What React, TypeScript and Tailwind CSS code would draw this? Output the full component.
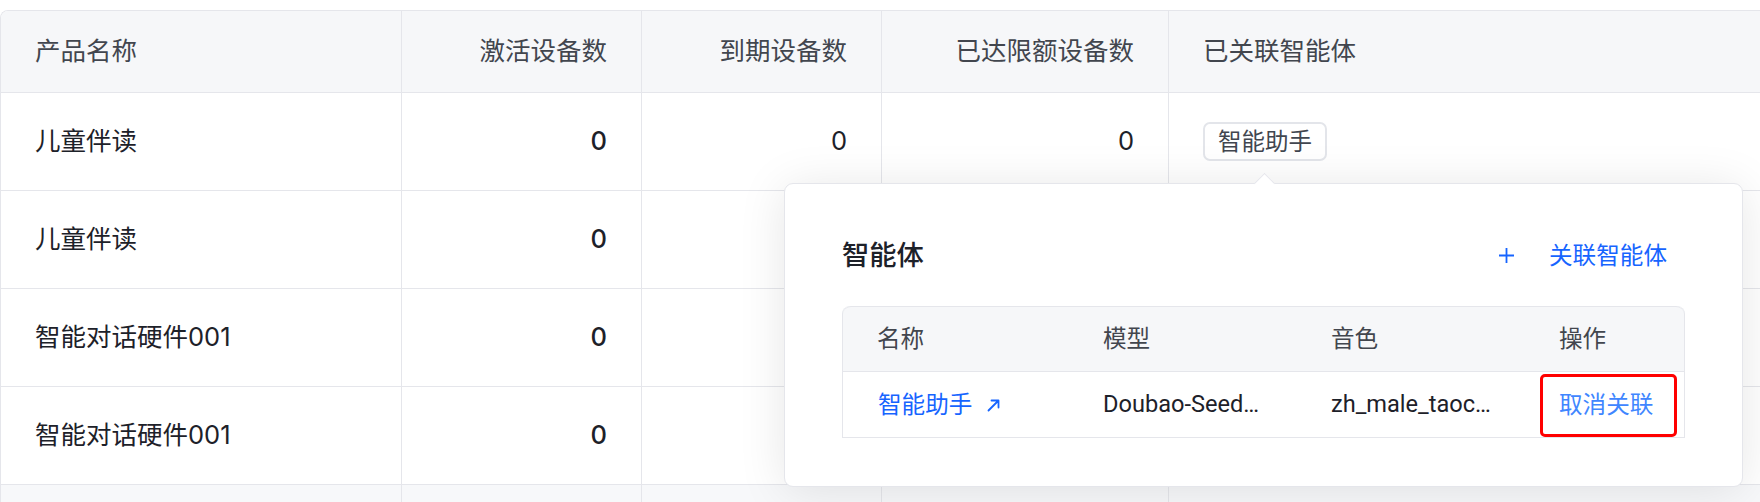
import React from "react";

const BORDER = "border-[#e5e6eb]";

type Row = { name: string; active: string; expired?: string; limited?: string; agent?: string };

const rows: Row[] = [
  { name: "儿童伴读", active: "0", expired: "0", limited: "0", agent: "智能助手" },
  { name: "儿童伴读", active: "0" },
  { name: "智能对话硬件001", active: "0" },
  { name: "智能对话硬件001", active: "0" },
];

function PlusIcon() {
  return (
    <svg width="17" height="17" viewBox="0 0 17 17" fill="none" stroke="#1664ff" strokeWidth="1.8">
      <path d="M8.5 1v15M1 8.5h15" />
    </svg>
  );
}

function ArrowIcon() {
  return (
    <svg width="13" height="13" viewBox="0 0 13 13" fill="none" stroke="#1664ff" strokeWidth="1.8" strokeLinecap="round" strokeLinejoin="round">
      <path d="M1.5 11.5 11.5 1.5M4.5 1.5h7v7" />
    </svg>
  );
}

export default function App() {
  const cell = `border-r border-b ${BORDER} flex items-center px-[34px]`;
  return (
    <div className="relative w-[1760px] h-[502px] overflow-hidden bg-white pt-[10px] font-['Inter','Noto_Sans_CJK_SC',sans-serif]">
      {/* main table */}
      <div className={`w-[1800px] border-l border-t ${BORDER} rounded-tl-[8px] overflow-hidden`}>
        <div className="grid grid-cols-[401px_240px_240px_287px_1fr] h-[82px] bg-[#f6f7f9] text-[25.5px] text-[#42464e]">
          <div className={cell}>产品名称</div>
          <div className={`${cell} justify-end`}>激活设备数</div>
          <div className={`${cell} justify-end`}>到期设备数</div>
          <div className={`${cell} justify-end`}>已达限额设备数</div>
          <div className={cell}>已关联智能体</div>
        </div>
        {rows.map((r, i) => (
          <div key={i} className="grid grid-cols-[401px_240px_240px_287px_1fr] h-[98px] bg-white text-[25.5px] text-[#1d2129]">
            <div className={cell}>{r.name}</div>
            <div className={`${cell} justify-end font-medium`}>{r.active}</div>
            <div className={`${cell} justify-end`}>{r.expired}</div>
            <div className={`${cell} justify-end`}>{r.limited}</div>
            <div className={cell}>
              {r.agent && (
                <span className="h-[39px] px-[13px] flex items-center rounded-[7px] border-2 border-[#e3e5ea] text-[23.5px] text-[#41464f]">
                  {r.agent}
                </span>
              )}
            </div>
          </div>
        ))}
        <div className="grid grid-cols-[401px_240px_240px_287px_1fr] h-[98px] bg-[#f7f8fa]">
          <div className={cell}></div>
          <div className={cell}></div>
          <div className={cell}></div>
          <div className={cell}></div>
          <div className={cell}></div>
        </div>
      </div>

      {/* popover */}
      <div className="absolute left-[784px] top-[183px] w-[959px] h-[304px] bg-white border border-[#e5e6eb] rounded-[9px] shadow-[0_4px_48px_rgba(0,0,0,0.1)] px-[57px] pt-[52px]">
        <div className="absolute left-[472px] -top-[8px] w-[15px] h-[15px] bg-white border-l border-t border-[#e5e6eb] rotate-45" />
        <div className="flex items-center h-[40px]">
          <span className="text-[27.3px] font-medium text-[#1d2129]">智能体</span>
          <div className="ml-auto flex items-center pr-[18px] text-[23.6px] text-[#1664ff]">
            <PlusIcon />
            <span className="ml-[34px]">关联智能体</span>
          </div>
        </div>
        <div className={`mt-[30px] border-l border-r ${BORDER} rounded-t-[8px]`}>
          <div className={`grid grid-cols-[226px_228px_228px_1fr] h-[66px] bg-[#f6f7f9] border-t border-b ${BORDER} rounded-t-[8px] text-[23.6px] text-[#42464e]`}>
            <div className="flex items-center pl-[34px]">名称</div>
            <div className="flex items-center pl-[34px]">模型</div>
            <div className="flex items-center pl-[34px]">音色</div>
            <div className="flex items-center pl-[34px]">操作</div>
          </div>
          <div className={`grid grid-cols-[226px_228px_228px_1fr] h-[66px] border-b ${BORDER} text-[23.6px] text-[#1d2129]`}>
            <div className="flex items-center pl-[35px] text-[#1664ff]">
              <span>智能助手</span>
              <span className="ml-[15px] mt-[2px]"><ArrowIcon /></span>
            </div>
            <div className="flex items-center pl-[34px] whitespace-nowrap font-['Roboto',sans-serif]">Doubao-Seed…</div>
            <div className="flex items-center pl-[34px] whitespace-nowrap font-['Roboto',sans-serif]">zh_male_taoc…</div>
            <div className="relative flex items-center pl-[34px] text-[#4086ff]">
              <span>取消关联</span>
              <div className="absolute left-[15px] right-[7px] top-[2px] bottom-0 border-[3px] border-[#ff0000] rounded-[5px]" />
            </div>
          </div>
        </div>
      </div>
    </div>
  );
}
